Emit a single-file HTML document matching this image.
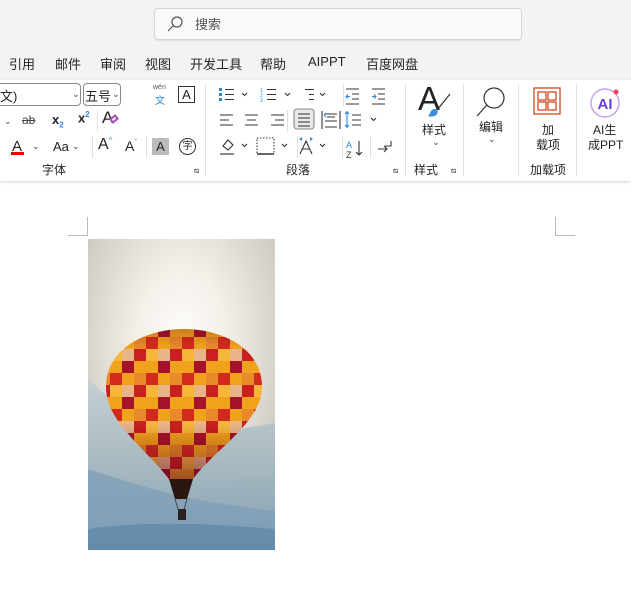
<!DOCTYPE html><html><head><meta charset="utf-8"><style>
*{margin:0;padding:0;box-sizing:border-box}
body{width:631px;height:592px;overflow:hidden;background:#fff;font-family:"Liberation Sans","Noto Sans CJK SC",sans-serif;color:#242424;position:relative}
.a{position:absolute;white-space:nowrap}
.top{position:absolute;left:0;top:0;width:631px;height:80px;background:#f3f3f3}
.rib{position:absolute;left:0;top:80px;width:631px;height:101px;background:#fff;box-shadow:0 1px 3px rgba(0,0,0,.18)}
.sep{position:absolute;width:1px;background:#e1e1e1}
.t{font-size:13px}
.s{font-size:12px}
.chev{font-size:9px;color:#444}
</style></head><body>
<div class="top"></div>
<div class="a" style="left:154px;top:8px;width:368px;height:32px;background:#fafafa;border:1px solid #d6d6d6;border-radius:4px;box-shadow:0 1px 1px rgba(0,0,0,.08)"></div>
<svg class="a" style="left:166px;top:14px" width="20" height="20"><circle cx="11" cy="8" r="5" fill="none" stroke="#555" stroke-width="1.2"/><line x1="7.5" y1="11.5" x2="2" y2="17" stroke="#555" stroke-width="1.2"/></svg>
<div class="a t" style="left:195px;top:14px;color:#555">搜索</div>
<div class="a t" style="left:9px;top:54px">引用</div>
<div class="a t" style="left:55px;top:54px">邮件</div>
<div class="a t" style="left:100px;top:54px">审阅</div>
<div class="a t" style="left:145px;top:54px">视图</div>
<div class="a t" style="left:190px;top:54px">开发工具</div>
<div class="a t" style="left:260px;top:54px">帮助</div>
<div class="a t" style="left:308px;top:54px">AIPPT</div>
<div class="a t" style="left:366px;top:54px">百度网盘</div>
<div class="rib"></div>
<div class="a" style="left:-5px;top:83px;width:86px;height:23px;border:1px solid #8a8a8a;border-radius:4px"></div>
<div class="a t" style="left:0;top:86px">文)</div><div class="a chev" style="left:72px;top:89px">⌄</div>
<div class="a" style="left:83px;top:83px;width:38px;height:23px;border:1px solid #8a8a8a;border-radius:4px"></div>
<div class="a t" style="left:85px;top:86px">五号</div><div class="a chev" style="left:112px;top:89px">⌄</div>
<div class="a" style="left:153px;top:84px;font-size:7px;color:#555">wén</div>
<div class="a" style="left:155px;top:92px;font-size:10px;color:#2b88d8">文</div>
<div class="a" style="left:178px;top:86px;width:17px;height:17px;border:1px solid #333;font-size:13px;text-align:center;line-height:15px">A</div>
<div class="a chev" style="left:4px;top:116px">⌄</div>
<div class="a s" style="left:22px;top:113px;text-decoration:line-through;color:#444">ab</div>
<div class="a" style="left:52px;top:112px;font-size:13px;font-weight:bold">x<sub style="font-size:8px;color:#2b88d8">2</sub></div>
<div class="a" style="left:78px;top:110px;font-size:13px;font-weight:bold">x<sup style="font-size:8px;color:#2b88d8">2</sup></div>
<div class="sep" style="top:110px;height:22px;left:97px"></div>
<div class="a" style="left:102px;top:108px;font-size:17px">A</div><div class="a" style="left:110px;top:116px;width:8px;height:6px;border:2px solid #a34db8;transform:rotate(-40deg)"></div>
<div class="a" style="left:12px;top:138px;font-size:15px">A</div><div class="a" style="left:11px;top:152px;width:13px;height:3px;background:#e00"></div>
<div class="a chev" style="left:32px;top:141px">⌄</div>
<div class="a t" style="left:53px;top:139px">Aa</div><div class="a chev" style="left:72px;top:141px">⌄</div>
<div class="sep" style="top:136px;height:22px;left:92px"></div>
<div class="a" style="left:98px;top:136px;font-size:16px">A<span style="font-size:8px;vertical-align:top;color:#2b88d8">^</span></div>
<div class="a" style="left:125px;top:138px;font-size:14px">A<span style="font-size:8px;vertical-align:top;color:#2b88d8">ˇ</span></div>
<div class="sep" style="left:146px;top:136px;height:22px"></div>
<div class="a" style="left:152px;top:138px;width:17px;height:17px;background:#bbb;font-size:13px;text-align:center;line-height:17px">A</div>
<div class="a" style="left:179px;top:138px;width:17px;height:17px;border:1.3px solid #333;border-radius:50%;font-size:10px;text-align:center;line-height:15px">字</div>
<div class="a s" style="left:42px;top:161px">字体</div>
<div class="a" style="left:194px;top:166px;font-size:8px">⧅</div>
<div class="sep" style="left:205px;top:84px;height:92px"></div>
<svg class="a" style="left:210px;top:84px" width="196" height="80" stroke="#333" fill="none" stroke-width="1.1">
<g fill="#2b88d8" stroke="none"><rect x="9" y="4" width="3" height="3"/><rect x="9" y="9" width="3" height="3"/><rect x="9" y="14" width="3" height="3"/></g>
<path d="M15 5.5h9M15 10.5h9M15 15.5h9"/><path d="M32 9l2.5 2.5 2.5-2.5"/>
<path d="M57 5.5h9M57 10.5h9M57 15.5h9"/><path d="M75 9l2.5 2.5 2.5-2.5"/>
<text x="50" y="8" font-size="5" fill="#2b88d8" stroke="none">1</text><text x="50" y="13" font-size="5" fill="#2b88d8" stroke="none">2</text><text x="50" y="18" font-size="5" fill="#2b88d8" stroke="none">3</text>
<path d="M95 5.5h9M99 10.5h5M99 15.5h5"/><path d="M110 9l2.5 2.5 2.5-2.5"/>
<path d="M136 5h13M142 10h7M142 15h7M136 20h13"/><path d="M140 12.5h-4m2-2l-2 2 2 2" stroke="#2b88d8"/>
<path d="M162 5h13M168 10h7M168 15h7M162 20h13"/><path d="M162 12.5h4m-2-2l2 2-2 2" stroke="#2b88d8"/>
<path d="M10 31h13M10 36h9M10 41h13M35 31h13M37 36h9M35 41h13M61 31h13M65 36h9M61 41h13"/>
<rect x="84" y="25" width="20" height="20" rx="3" fill="#e8e8e8" stroke="#888"/>
<path d="M88 30h12M88 34h12M88 38h12M88 42h12"/>
<path d="M112 27v18M130 27v18M115 30h12M115 37h12M115 43h12M117 33h8"/><path d="M114 31l2-2M114 31l2 2" stroke="#2b88d8"/>
<path d="M137 27v17M137 28l-2 2M137 28l2 2M137 43l-2-2M137 43l2-2" stroke="#2b88d8"/><path d="M142 31h9M142 36h9M142 41h9"/><path d="M161 34l2.5 2.5 2.5-2.5"/>
<path d="M10 70h14" stroke="#888" stroke-width="2"/><path d="M13 62l5-6 5 5-5 5z"/><path d="M32 60l2.5 2.5 2.5-2.5"/>
<rect x="47" y="54" width="17" height="16" stroke-dasharray="1.5 1.5"/><path d="M47 70h17" stroke-width="1.5"/><path d="M72 60l2.5 2.5 2.5-2.5"/>
<path d="M90 70l6-13 6 13M92 65h8"/><path d="M89 55l3-2v4zM103 55l-3-2v4z" fill="#2b88d8" stroke="none"/><path d="M110 60l2.5 2.5 2.5-2.5"/>
<text x="136" y="64" font-size="9" fill="#2b88d8" stroke="none">A</text><text x="136" y="74" font-size="9" fill="#333" stroke="none">Z</text><path d="M149 57v14M146 68l3 3 3-3"/>
<path d="M168 65h9M174 62l3 3-3 3M181 57v5h-6"/>
</svg>
<div class="sep" style="left:343px;top:84px;height:22px"></div>
<div class="sep" style="left:287px;top:110px;height:22px"></div>
<div class="sep" style="left:297px;top:136px;height:22px"></div>
<div class="sep" style="left:342px;top:136px;height:22px"></div>
<div class="sep" style="left:370px;top:136px;height:22px"></div>
<div class="a s" style="left:286px;top:161px">段落</div>
<div class="a" style="left:393px;top:166px;font-size:8px">⧅</div>
<div class="sep" style="left:405px;top:84px;height:92px"></div>
<div class="a" style="left:418px;top:80px;font-size:33px;font-weight:300">A</div>
<svg class="a" style="left:425px;top:92px" width="30" height="30"><path d="M25 2L12 18" stroke="#333" stroke-width="1.2"/><path d="M9 17c3 0 5 2 3 5-2 3-7 3-9 2 2-1 2-6 6-7z" fill="#3a8fd8"/></svg>
<div class="a s" style="left:422px;top:121px">样式</div>
<div class="a chev" style="left:432px;top:137px">⌄</div>
<div class="a s" style="left:414px;top:161px">样式</div>
<div class="a" style="left:451px;top:166px;font-size:8px">⧅</div>
<div class="sep" style="left:463px;top:84px;height:92px"></div>
<svg class="a" style="left:474px;top:84px" width="36" height="34"><circle cx="20" cy="14" r="10" fill="none" stroke="#333" stroke-width="1.2"/><line x1="13" y1="21" x2="3" y2="32" stroke="#333" stroke-width="1.2"/></svg>
<div class="a s" style="left:479px;top:118px">编辑</div>
<div class="a chev" style="left:488px;top:134px">⌄</div>
<div class="sep" style="left:518px;top:84px;height:92px"></div>
<svg class="a" style="left:533px;top:87px" width="30" height="30" fill="none" stroke="#d2461f" stroke-width="1.3"><rect x="1" y="1" width="26" height="26"/><rect x="5" y="5" width="8" height="8"/><rect x="15" y="5" width="8" height="8"/><rect x="5" y="15" width="8" height="8"/><rect x="15" y="15" width="8" height="8"/></svg>
<div class="a s" style="left:542px;top:121px">加</div>
<div class="a s" style="left:536px;top:136px">载项</div>
<div class="a s" style="left:530px;top:161px">加载项</div>
<div class="sep" style="left:576px;top:84px;height:92px"></div>
<svg class="a" style="left:589px;top:87px" width="34" height="32"><circle cx="16" cy="16" r="14" fill="#fff" stroke="#c6a4ef" stroke-width="1.5"/><text x="16" y="22" text-anchor="middle" font-size="15" font-weight="bold" fill="#6a3fd8" font-family="Liberation Sans">AI</text><circle cx="27" cy="5" r="2.5" fill="#ee4455"/></svg>
<div class="a s" style="left:593px;top:121px">AI生</div>
<div class="a s" style="left:588px;top:136px">成PPT</div>
<div class="a" style="left:68px;top:217px;width:20px;height:19px;border-right:1px solid #bbb;border-bottom:1px solid #bbb"></div>
<div class="a" style="left:555px;top:217px;width:20px;height:19px;border-left:1px solid #bbb;border-bottom:1px solid #bbb"></div>
<svg class="a" style="left:88px;top:239px" width="187" height="311">
<defs>
<radialGradient id="sun" cx="0.5" cy="0.33" r="0.6"><stop offset="0" stop-color="#fffefb"/><stop offset="0.4" stop-color="#f3efe9"/><stop offset="1" stop-color="#cfc9c3"/></radialGradient>
<linearGradient id="mt" x1="0" y1="0" x2="0" y2="1"><stop offset="0" stop-color="#c4cfd2"/><stop offset="0.5" stop-color="#a5b8bf"/><stop offset="1" stop-color="#7d9cb3"/></linearGradient>
<pattern id="chk" x="10" y="2" width="36" height="36" patternUnits="userSpaceOnUse"><rect width="36" height="36" fill="#f0a21c"/><rect width="12" height="12" fill="#c91f1f"/><rect x="24" y="12" width="12" height="12" fill="#a5122a"/><rect x="12" y="24" width="12" height="12" fill="#d42a1e"/><rect x="12" y="0" width="12" height="12" fill="#f5b63a"/><rect x="0" y="24" width="12" height="12" fill="#e8892a"/><rect x="24" y="0" width="12" height="12" fill="#e9b48a"/></pattern>
<linearGradient id="shade" x1="0" y1="0" x2="0" y2="1"><stop offset="0" stop-color="#3a0a2a" stop-opacity="0.35"/><stop offset="0.15" stop-color="#500" stop-opacity="0"/><stop offset="0.55" stop-color="#500" stop-opacity="0"/><stop offset="1" stop-color="#5a0b3a" stop-opacity="0.8"/></linearGradient>
<clipPath id="bc"><path d="M96 90C60 90 18 108 18 148c0 35 40 62 63 92h24c22-30 69-57 69-92 0-40-42-58-78-58z"/></clipPath>
</defs>
<rect width="187" height="311" fill="url(#sun)"/>
<path d="M0 140l20 18 30 12 40 30 50-8 47-8v127H0z" fill="url(#mt)" opacity="0.95"/>
<path d="M0 230c40 12 80 30 187 42v39H0z" fill="#7d9db8" opacity="0.7"/>
<path d="M0 290c50-8 120-6 187 0v21H0z" fill="#5f88a8" opacity="0.8"/>
<g clip-path="url(#bc)"><rect x="0" y="80" width="187" height="190" fill="url(#chk)"/><rect x="0" y="80" width="187" height="190" fill="url(#shade)"/></g>
<path d="M81 240h24l-6 20h-12z" fill="#2a1810"/>
<path d="M87 260l3 10M99 260l-3 10" stroke="#333" stroke-width="0.8"/>
<rect x="90" y="270" width="8" height="11" fill="#2a2020"/>
</svg>
</body></html>
